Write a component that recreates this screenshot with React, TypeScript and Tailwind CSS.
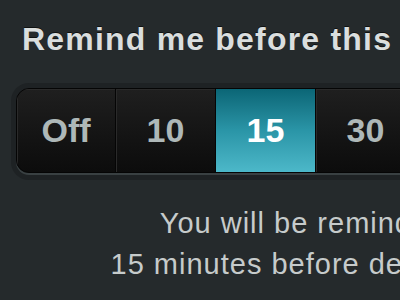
import React from 'react';

const options = ['Off', '10', '15', '30', '60'];

export default function App() {
  const selected = '15';

  return (
    <div className="w-[400px] h-[300px] overflow-hidden bg-[#252a2c]" style={{ fontFamily: '"Liberation Sans", Arial, sans-serif' }}>
      <div className="w-[606px]">
        {/* Title */}
        <h1 className="pl-[22px] pt-[21px] text-[32px] leading-[36px] font-bold text-[#dadede] tracking-[1.2px] [text-shadow:0_-1px_0_rgba(0,0,0,0.6)]">
          Remind me before this
        </h1>

        {/* Segmented control */}
        <div className="mt-[26px] ml-[11px] w-[588px] rounded-[18px] bg-[#1e2224] p-[5px] pb-[7px]">
          <div className="flex h-[85px] rounded-[13px] border border-[#050505] bg-gradient-to-b from-[#1f1f1f] to-[#0c0c0c] overflow-hidden shadow-[0_2px_0_#394042]">
            {options.map((opt, i) => {
              const active = opt === selected;
              return (
                <div
                  key={opt}
                  className={`flex flex-none items-center justify-center text-[34px] font-bold ${
                    i > 0 ? 'w-[100px] border-l border-[#050505]' : 'w-[98px]'
                  } ${
                    active
                      ? 'bg-gradient-to-b from-[#0b6676] via-[#2a95a7] to-[#4cb8c9] text-white'
                      : 'text-[#aeb8b8] shadow-[inset_1px_1px_0_#2a2a2a]'
                  }`}
                >
                  {opt}
                </div>
              );
            })}
          </div>
        </div>

        {/* Hint */}
        <p className="mt-[23px] text-center text-[29px] leading-[41px] tracking-[1px] text-[#c6cbcb]">
          You will be reminded
          <br />
          15 minutes before deadline.
        </p>
      </div>
    </div>
  );
}
